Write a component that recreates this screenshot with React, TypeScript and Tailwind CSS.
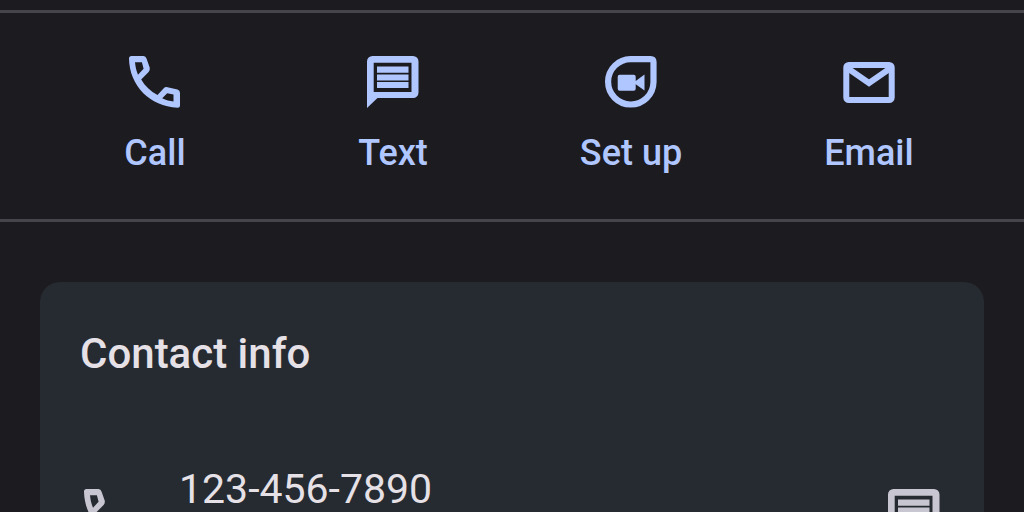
import type { ReactNode } from "react";

function PhoneGlyph() {
  return (
    <svg viewBox="0 0 52 52" className="size-13" fill="currentColor" aria-hidden="true">
      <path
        fillRule="evenodd"
        d="M2.500 0H14.500Q16.800 0 17.500 2.500L20.700 11.500Q21.300 14 19.600 15.900L12.200 23.500C16 30 21.500 35.200 28.500 39L34.500 32.400Q36.200 30.700 38.500 31.200L48.500 33.600Q51 34.300 51 37V49.200Q51 51.700 48.500 51.700C21 50.500 0.500 30 0 2.500Q0 0 2.500 0ZM6 6.300C6.400 10.500 7.200 14.500 9 18.700L14.600 12.700L12.900 6.300ZM33.200 42.300C37 44.200 40.600 45.100 44.500 45.400V38.600L38.200 37.200Z"
      />
    </svg>
  );
}

function MessageGlyph() {
  return (
    <svg viewBox="0 0 52 52" className="size-13" fill="currentColor" aria-hidden="true">
      <path fillRule="evenodd" d="M5.500 0H46A5.500 5.500 0 0 1 51.500 5.500V36.500A5.500 5.500 0 0 1 46 42H10.500L0 52V5.500A5.500 5.500 0 0 1 5.500 0ZM6.700 6.800V36H44.500V6.800Z" />
      <path d="M10 10.600H41.500V16.800H10ZM10 18.400H41.500V24.400H10ZM10 26H41.500V32H10Z" />
    </svg>
  );
}

function VideoGlyph() {
  return (
    <svg viewBox="0 0 52 52" className="size-13" fill="currentColor" aria-hidden="true">
      <path fill="none" stroke="currentColor" strokeWidth="6.200" d="M26 3.100H45.500Q48.500 3.100 48.500 6.100V26A22.700 22.700 0 1 1 26 3.100Z" />
      <path d="M14.700 18.700H28.700Q30.700 18.700 30.700 20.700V25L39.500 18.500V34.500L30.700 28.300V32.700Q30.700 34.700 28.700 34.700H14.700Q12.700 34.700 12.700 32.700V20.700Q12.700 18.700 14.700 18.700Z" />
    </svg>
  );
}

function MailGlyph() {
  return (
    <svg viewBox="0 0 52 52" className="size-13" fill="none" stroke="currentColor" strokeWidth="6" aria-hidden="true">
      <rect x="3.300" y="9" width="45.400" height="35" rx="2.500" />
      <path d="M5 12.500L26 27L47 12.500" />
    </svg>
  );
}

function Action({ label, icon }: { label: string; icon: ReactNode }) {
  return (
    <button type="button" className="flex flex-col items-center gap-[25px]">
      {icon}
      <span>{label}</span>
    </button>
  );
}

export default function App() {
  return (
    <div className="h-screen overflow-hidden bg-[#1c1b1f] pt-2.5 font-['Roboto','Noto_Sans',sans-serif]">
      <nav aria-label="Contact actions" className="grid grid-cols-4 border-y-3 border-[#46454b] px-9 pt-[43px] pb-[46px] text-[36px] leading-10 font-medium text-[#b0c6ff]">
        <Action label="Call" icon={<PhoneGlyph />} />
        <Action label="Text" icon={<MessageGlyph />} />
        <Action label="Set up" icon={<VideoGlyph />} />
        <Action label="Email" icon={<MailGlyph />} />
      </nav>
      <main className="mx-10 mt-15 rounded-[20px] bg-[#262a31] px-10 pt-12 pb-10 text-[#e5e1e6]">
        <h2 className="text-[42px] leading-12 font-medium">Contact info</h2>
        <div className="mt-[87px] flex items-start pr-1 pl-1 text-[#c8c6d0]">
          <a href="tel:123-456-7890" className="flex grow items-start gap-[43px]">
            <span className="pt-6"><PhoneGlyph /></span>
            <span className="text-[41px] leading-12 text-[#e5e1e6]">123-456-7890</span>
          </a>
          <button type="button" aria-label="Send a text message" className="pt-6">
            <MessageGlyph />
          </button>
        </div>
      </main>
    </div>
  );
}
